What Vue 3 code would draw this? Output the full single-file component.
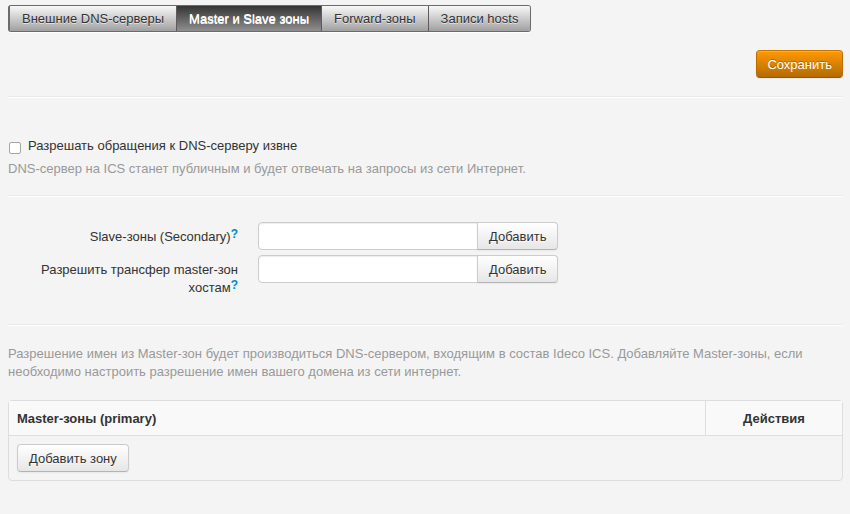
<script setup>
import { ref } from 'vue'

const tabs = ['Внешние DNS-серверы', 'Master и Slave зоны', 'Forward-зоны', 'Записи hosts']
const activeTab = ref(1)
const allowExternal = ref(false)
const slaveZone = ref('')
const transferHost = ref('')
</script>

<template>
  <main class="page">
    <nav class="tabs">
      <button
        v-for="(tab, i) in tabs"
        :key="tab"
        type="button"
        class="tab"
        :class="{ active: i === activeTab }"
        @click="activeTab = i"
      >{{ tab }}</button>
    </nav>

    <div class="actions">
      <button type="button" class="btn btn-save">Сохранить</button>
    </div>

    <hr class="rule" />

    <section class="access">
      <label class="check">
        <input v-model="allowExternal" type="checkbox" />
        <span>Разрешать обращения к DNS-серверу извне</span>
      </label>
      <p class="help">DNS-сервер на ICS станет публичным и будет отвечать на запросы из сети Интернет.</p>
    </section>

    <hr class="rule" />

    <form class="zones" @submit.prevent>
      <div class="row">
        <div class="row-label">
          <label for="slave">Slave-зоны (Secondary)</label><a href="#" class="hint">?</a>
        </div>
        <div class="group">
          <input id="slave" v-model="slaveZone" type="text" />
          <button type="button" class="btn">Добавить</button>
        </div>
      </div>
      <div class="row">
        <div class="row-label">
          <label for="transfer">Разрешить трансфер master-зон хостам</label><a href="#" class="hint">?</a>
        </div>
        <div class="group">
          <input id="transfer" v-model="transferHost" type="text" />
          <button type="button" class="btn">Добавить</button>
        </div>
      </div>
    </form>

    <hr class="rule" />

    <p class="help intro">Разрешение имен из Master-зон будет производиться DNS-сервером, входящим в состав Ideco ICS. Добавляйте Master-зоны, если необходимо настроить разрешение имен вашего домена из сети интернет.</p>

    <table class="table">
      <thead>
        <tr>
          <th>Master-зоны (primary)</th>
          <th class="ops">Действия</th>
        </tr>
      </thead>
      <tbody>
        <tr>
          <td colspan="2"><button type="button" class="btn">Добавить зону</button></td>
        </tr>
      </tbody>
    </table>
  </main>
</template>

<style>
body {
  background: #f4f4f4;
}
</style>

<style scoped>
.page {
  padding: 5px 7px 32px 8px;
  color: #333;
  font-family: "Liberation Sans", Arial, sans-serif;
  font-size: 13px;
  line-height: 18px;
}

button,
input {
  box-sizing: border-box;
  font: inherit;
  color: inherit;
}

button {
  cursor: pointer;
  white-space: nowrap;
}

.tabs {
  display: inline-flex;
  vertical-align: top;
  border: 1px solid #6b6b6b;
  border-left-width: 2px;
  border-radius: 3px;
  overflow: hidden;
  box-shadow: 0 1px 0 #fff;
}

.tab {
  height: 25px;
  padding: 0 12px;
  border: 0;
  border-right: 1px solid #5c5c5c;
  background: linear-gradient(#f8f8f8, #a0a0a0);
  text-shadow: 0 1px 0 rgba(255, 255, 255, 0.6);
}

.tab:last-child {
  border-right: 0;
}

.tab.active {
  background: linear-gradient(#353535, #8f8f8f);
  color: #fff;
  text-shadow: 0 1px 0 #fff;
}

.actions {
  display: flex;
  justify-content: flex-end;
  margin: 18px 0;
}

.btn {
  height: 28px;
  padding: 2px 11px 0;
  border: 1px solid #ccc;
  border-bottom-color: #b3b3b3;
  border-radius: 4px;
  background: linear-gradient(#fff, #e6e6e6);
  box-shadow: inset 0 1px 0 rgba(255, 255, 255, 0.2), 0 1px 2px rgba(0, 0, 0, 0.05);
  text-shadow: 0 1px 1px rgba(255, 255, 255, 0.75);
}

.btn-save {
  padding: 2px 10px 0;
  border-color: #c47600 #b86e00 #945900;
  background: linear-gradient(#ff9900, #b36b00);
  color: #fff;
  text-shadow: 0 -1px 0 rgba(0, 0, 0, 0.25);
}

.rule {
  margin: 17px 0 19px;
  border: 0;
  border-top: 1px solid #e9e9e9;
  border-bottom: 1px solid #fff;
}

.access {
  padding-top: 20px;
}

.check {
  display: flex;
  align-items: center;
  gap: 6px;
}

.check input {
  appearance: none;
  width: 12px;
  height: 12px;
  margin: 4px 1px 0;
  border: 1px solid #a5a5a5;
  border-radius: 2px;
  background: #fff;
}

.check input:checked {
  background: #0088cc;
}

.help {
  margin: 5px 0 0;
  color: #999;
}

.zones {
  display: grid;
  gap: 5px;
  padding: 6px 0 10px;
}

.row {
  display: flex;
  align-items: flex-start;
  gap: 20px;
}

.row-label {
  box-sizing: border-box;
  width: 230px;
  padding: 6px 0 0 20px;
  text-align: right;
}

.hint {
  color: #0088cc;
  font-size: 12px;
  font-weight: bold;
  line-height: 12px;
  text-decoration: none;
  vertical-align: 3px;
}

.group {
  display: flex;
}

.group input {
  width: 220px;
  height: 28px;
  padding: 4px;
  border: 1px solid #ccc;
  border-radius: 4px 0 0 4px;
  background: #fff;
  box-shadow: inset 0 1px 1px rgba(0, 0, 0, 0.075);
}

.group .btn {
  margin-left: -1px;
  border-radius: 0 4px 4px 0;
}

.intro {
  margin: 0 0 19px;
}

.table {
  width: 100%;
  border: 1px solid #ddd;
  border-radius: 4px;
  border-spacing: 0;
}

.table th {
  padding: 9px 8px 7px;
  background: #f9f9f9;
  text-align: left;
}

.table .ops {
  width: 120px;
  border-left: 1px solid #ddd;
  text-align: center;
}

.table td {
  padding: 8px;
  border-top: 1px solid #ddd;
}

.table .btn {
  display: block;
}
</style>
